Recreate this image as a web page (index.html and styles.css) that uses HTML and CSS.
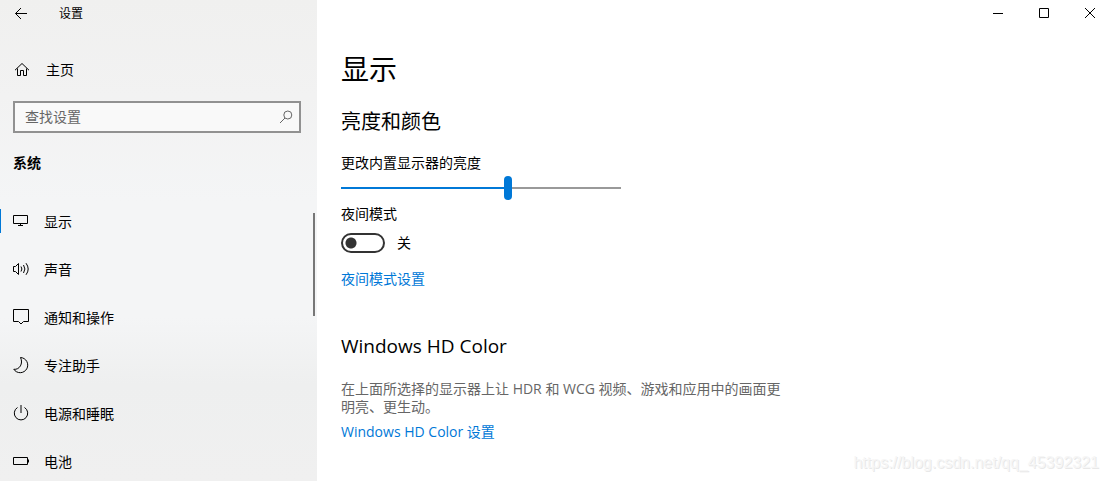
FILE: index.html
```html
<!DOCTYPE html>
<html lang="zh-CN">
<head>
<meta charset="utf-8">
<title>设置</title>
<link rel="stylesheet" href="styles.css">
</head>
<body>
<div class="window">
  <aside class="sidebar">
    <header class="titlebar">
      <button class="back" type="button" aria-label="返回">
        <svg width="16" height="16" viewBox="0 0 16 16"><path d="M14 7.500H2.500M8 2L2.500 7.500L8 13"/></svg>
      </button>
      <span class="app-title">设置</span>
    </header>
    <a class="home" href="#">
      <svg width="16" height="16" viewBox="0 0 16 16"><path d="M1 8.200L8 1.500L15 8.200M3.500 6.500V13.500H6.500V8.500H9.500V13.500H12.500V6.500"/></svg>
      <span>主页</span>
    </a>
    <form class="search">
      <input class="search-input" type="text" placeholder="查找设置" aria-label="查找设置">
      <button class="search-button" type="button" aria-label="搜索">
        <svg width="14" height="14" viewBox="0 0 14 14"><circle cx="8.800" cy="5" r="4"/><path d="M6 8L1 13"/></svg>
      </button>
    </form>
    <h2 class="group-title">系统</h2>
    <nav class="nav">
      <a class="nav-item nav-item-active" href="#">
        <svg width="18" height="18" viewBox="0 0 18 18"><path d="M1.500 3.500H15.500V11.500H1.500ZM8.500 11.500V13.500M6 13.500H11"/></svg>
        <span>显示</span>
      </a>
      <a class="nav-item" href="#">
        <svg width="18" height="18" viewBox="0 0 18 18"><path d="M1.500 6.500H3.500L6.500 3.500V14.500L3.500 11.500H1.500ZM9 6.500Q10.800 9 9 11.500M11.500 5Q14.300 9 11.500 13M14 3.200Q18.400 9 14 14.800"/></svg>
        <span>声音</span>
      </a>
      <a class="nav-item" href="#">
        <svg width="18" height="18" viewBox="0 0 18 18"><path d="M1.500 1.500H16.500V13.500H11.500L9 16L6.500 13.500H1.500Z"/></svg>
        <span>通知和操作</span>
      </a>
      <a class="nav-item" href="#">
        <svg width="18" height="18" viewBox="0 0 18 18"><path d="M8.500 1.500A7.600 7.600 0 1 1 1.800 13.300C7.500 14 11.500 7.500 8.500 1.500Z"/></svg>
        <span>专注助手</span>
      </a>
      <a class="nav-item" href="#">
        <svg width="18" height="18" viewBox="0 0 18 18"><path d="M5.500 3.500A6.700 6.700 0 1 0 12.500 3.500M9 1V9"/></svg>
        <span>电源和睡眠</span>
      </a>
      <a class="nav-item" href="#">
        <svg width="18" height="18" viewBox="0 0 18 18"><path d="M1.500 5.500H15.500V12.500H1.500ZM16.500 7.500V10.500"/></svg>
        <span>电池</span>
      </a>
    </nav>
    <div class="scrollbar"></div>
  </aside>

  <main class="content">
    <div class="window-controls">
      <button type="button" aria-label="最小化"><svg width="12" height="12" viewBox="0 0 12 12"><path d="M1 6.500H11"/></svg></button>
      <button type="button" aria-label="最大化"><svg width="12" height="12" viewBox="0 0 12 12"><path d="M1.500 1.500H10.500V10.500H1.500Z"/></svg></button>
      <button type="button" aria-label="关闭"><svg width="12" height="12" viewBox="0 0 12 12"><path d="M1 1L11 11M11 1L1 11"/></svg></button>
    </div>
    <h1 class="page-title">显示</h1>
    <section class="section">
      <h2 class="section-title">亮度和颜色</h2>
      <label class="label" for="brightness">更改内置显示器的亮度</label>
      <input class="slider" id="brightness" type="range" min="0" max="100" value="60">
      <label class="label" for="night">夜间模式</label>
      <div class="toggle-row">
        <input class="toggle" id="night" type="checkbox" role="switch">
        <span>关</span>
      </div>
      <a class="link" href="#">夜间模式设置</a>
    </section>
    <section class="section hd-color">
      <h2 class="section-title">Windows HD Color</h2>
      <p class="description">在上面所选择的显示器上让 HDR 和 WCG 视频、游戏和应用中的画面更明亮、更生动。</p>
      <a class="link" href="#">Windows HD Color 设置</a>
    </section>
    <span class="watermark">https://blog.csdn.net/qq_45392321</span>
  </main>
</div>
</body>
</html>
```
FILE: styles.css
```css
* {
  box-sizing: border-box;
}

body {
  margin: 0;
  background: #fff;
  color: #000;
  font: 14px/20px "Open Sans", "Noto Sans CJK SC", sans-serif;
}

h1, h2, p {
  margin: 0;
  font-weight: 400;
}

a {
  color: inherit;
  text-decoration: none;
}

button {
  display: grid;
  place-items: center;
  padding: 0;
  border: 0;
  background: none;
}

svg {
  flex: none;
  fill: none;
  stroke: #000;
  stroke-width: 1;
}

.window {
  display: grid;
  grid-template-columns: 317px 1fr;
  height: 100vh;
  overflow: hidden;
}

.sidebar {
  position: relative;
  min-height: 0;
  overflow: hidden;
  background: linear-gradient(#f0f0ef, #f2f2f2 20%, #f4f5f6 42%, #f4f5f6 66%, #eeefef 80%, #f0f0f0);
}

.titlebar {
  display: flex;
  align-items: center;
  height: 27px;
  padding-left: 13px;
  gap: 30px;
  font-size: 12px;
}

.home {
  display: flex;
  align-items: center;
  gap: 16px;
  height: 48px;
  margin-top: 19px;
  padding-left: 14px;
}

.search {
  display: flex;
  align-items: center;
  height: 32px;
  margin: 7px 16px 0 13px;
  padding: 0 6px 0 10px;
  border: 2px solid #919191;
  background: #f9f9f9;
}

.search-input {
  flex: 1;
  min-width: 0;
  padding: 0;
  border: 0;
  outline: 0;
  background: none;
  font: inherit;
}

.search-input::placeholder {
  color: #666;
}

.search-button svg {
  stroke: #666;
}

.group-title {
  margin: 20px 0 24px 13px;
  font-size: 14px;
  font-weight: 700;
}

.nav-item {
  display: flex;
  align-items: center;
  gap: 14px;
  height: 48px;
  padding-left: 12px;
}

.nav-item span {
  padding-top: 1px;
}

.nav-item-active {
  background: linear-gradient(#0078d7, #0078d7) left center / 1px 24px no-repeat;
}

.scrollbar {
  position: absolute;
  top: 213px;
  right: 2px;
  width: 2px;
  height: 103px;
  background: #777;
}

.content {
  position: relative;
  padding-left: 24px;
}

.window-controls {
  display: flex;
  justify-content: flex-end;
  gap: 12px;
  height: 26px;
}

.window-controls button {
  width: 34px;
}

.page-title {
  margin-top: 23px;
  font-size: 28px;
  line-height: 40px;
}

.section {
  display: flex;
  flex-direction: column;
  align-items: flex-start;
  margin-top: 19px;
}

.section-title {
  margin-bottom: 17px;
  font-size: 20px;
  line-height: 28px;
}

.hd-color {
  margin-top: 43px;
}

.hd-color .section-title {
  margin-bottom: 20px;
  font-size: 19px;
}

.slider {
  width: 280px;
  height: 24px;
  margin: 3px 0 4px;
  appearance: none;
  background: linear-gradient(to right, #0078d7 60%, #999 60%) center / 100% 2px no-repeat;
}

.slider::-webkit-slider-thumb {
  width: 8px;
  height: 24px;
  border-radius: 4px;
  appearance: none;
  background: #0078d7;
}

.toggle-row {
  display: flex;
  align-items: center;
  gap: 12px;
  margin: 9px 0 16px;
}

.toggle {
  width: 44px;
  height: 20px;
  margin: 0;
  border: 2px solid #333;
  border-radius: 10px;
  appearance: none;
  background: radial-gradient(circle at 8px 8px, #333 5px, transparent 6px);
}

.link {
  color: #0078d7;
}

.description {
  max-width: 446px;
  margin-bottom: 6px;
  color: #666;
  line-height: 18px;
}

.watermark {
  position: absolute;
  right: 8px;
  bottom: 8px;
  color: #f6f6f6;
  font: 16px/20px "Liberation Sans", sans-serif;
  text-shadow: 1px 1px 0 #e8e8e8;
}
```
